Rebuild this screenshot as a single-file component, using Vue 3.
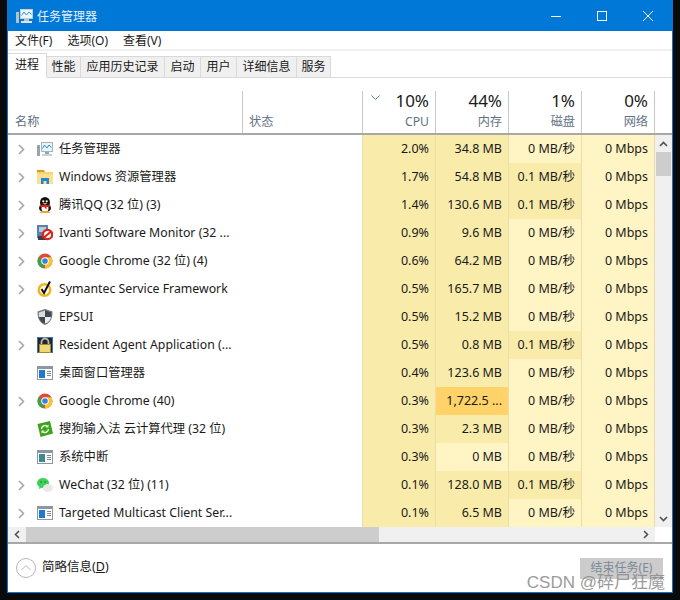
<template>
  <div class="window">
    <div class="titlebar">
      <svg class="title-icon" viewBox="0 0 17 16" width="17" height="16">
        <rect x="4" y="1" width="13" height="10" fill="#c3ccd1" />
        <rect x="5" y="2" width="11" height="8" fill="#eaf7fc" />
        <path d="M5.500 7.500 8 4l2.500 3L13 4l2.500 2.500" fill="none" stroke="#3d8fd0" stroke-width="1" />
        <rect x="0" y="4" width="3" height="11" fill="#b9c2c6" />
        <rect x="1" y="6" width="1" height="1" fill="#5fe05f" />
        <rect x="8" y="11" width="5" height="2" fill="#b9c2c6" />
        <rect x="5" y="13" width="11" height="2" fill="#dfe5e8" />
      </svg>
      <span class="title-text">任务管理器</span>
      <div class="win-controls">
        <svg viewBox="0 0 10 10" width="10" height="10"><path d="M0 5.500h10" stroke="#fff" stroke-width="1" /></svg>
        <svg viewBox="0 0 10 10" width="10" height="10"><rect x=".5" y=".5" width="9" height="9" fill="none" stroke="#fff" stroke-width="1" /></svg>
        <svg viewBox="0 0 10 10" width="10" height="10"><path d="M0 0l10 10M10 0 0 10" stroke="#fff" stroke-width="1" /></svg>
      </div>
    </div>

    <div class="menubar">
      <span v-for="m in menus" :key="m">{{ m }}</span>
    </div>

    <div class="tabs">
      <div v-for="(t, i) in tabs" :key="t.label" :class="['tab', i === 0 ? 'active' : '']" :style="{ width: t.w + 'px' }">{{ t.label }}</div>
    </div>

    <div class="table-head">
      <div class="th th-name"><span class="th-label">名称</span></div>
      <div class="th th-status"><span class="th-label">状态</span></div>
      <div v-for="c in columns" :key="c.label" class="th th-num">
        <svg v-if="c.sort" class="sort" viewBox="0 0 9 5" width="9" height="5"><path d="M.5.5l4 4 4-4" fill="none" stroke="#5b7f9f" stroke-width="1" /></svg>
        <span class="th-pct">{{ c.pct }}</span>
        <span class="th-label">{{ c.label }}</span>
      </div>
    </div>

    <div class="table-body">
      <div class="rows">
        <div v-for="r in rows" :key="r.name" class="row">
          <div class="cell-name">
            <span class="chevron">
              <svg v-if="r.expand" viewBox="0 0 7 11" width="7" height="11"><path d="M1 1l4.500 4.500L1 10" fill="none" stroke="#a6a6a6" stroke-width="1.600" /></svg>
            </span>
            <svg class="app-icon" viewBox="0 0 16 16" width="16" height="16">
              <template v-if="r.icon === 'taskmgr'">
                <rect x="4" y="1" width="12" height="10" fill="#a9b4ba" />
                <rect x="5" y="2" width="10" height="8" fill="#e4f5fb" />
                <path d="M5.500 7.500 7.500 4 10 7l2-3 2.500 2.500" fill="none" stroke="#3d8fd0" stroke-width="1" />
                <rect x="0" y="4" width="3" height="11" fill="#9aa5ab" />
                <rect x="1" y="6" width="1" height="1" fill="#3fc03f" />
                <rect x="8" y="11" width="4" height="2" fill="#9aa5ab" />
                <rect x="5" y="13" width="10" height="2" fill="#c9d1d5" />
              </template>
              <template v-else-if="r.icon === 'explorer'">
                <path d="M0 1h7l1 2h-8z" fill="#d69a2d" />
                <rect x="0" y="3" width="16" height="12" fill="#f6d36f" />
                <rect x="0" y="5" width="16" height="10" fill="#fbe08f" />
                <path d="M4 15v-6h8v6h-2.500v-3h-3v3z" fill="#1f86d8" />
              </template>
              <template v-else-if="r.icon === 'qq'">
                <ellipse cx="8" cy="5.500" rx="5" ry="5.500" fill="#111" />
                <ellipse cx="8" cy="11" rx="6" ry="4.300" fill="#111" />
                <ellipse cx="8" cy="11.500" rx="3.500" ry="3.200" fill="#fff" />
                <circle cx="6.300" cy="4.300" r="1.100" fill="#fff" />
                <circle cx="9.700" cy="4.300" r="1.100" fill="#fff" />
                <path d="M2.500 8h11l-1 2H9.500v2.500L7 10H3.500z" fill="#d8261c" />
                <path d="M5.500 6h5L8 7.800z" fill="#f5b52a" />
                <path d="M2 16l3.500-2h5l3.500 2z" fill="#f5a623" />
              </template>
              <template v-else-if="r.icon === 'ivanti'">
                <rect x="0" y="0" width="11" height="13" fill="#5d7fa8" />
                <rect x="2" y="2" width="7" height="5" fill="#b7cbe0" />
                <rect x="1" y="11" width="9" height="4" fill="#3b3f46" />
                <circle cx="10.500" cy="9.500" r="4.700" fill="#fff" stroke="#d8261c" stroke-width="2.200" />
                <path d="M7 12.500l7-6" stroke="#d8261c" stroke-width="2.200" />
              </template>
              <template v-else-if="r.icon === 'chrome'">
                <circle cx="8" cy="8" r="7.500" fill="#dd4b39" />
                <path d="M8 8v7.500A7.500 7.500 0 0 0 15.500 8c0-1.300-.4-2.600-1-3.700H8z" fill="#f7c531" />
                <path d="M8 8 6.500 15.300A7.500 7.500 0 0 1 2 3.500l3 5z" fill="#3ba14a" />
                <circle cx="8" cy="8" r="3.800" fill="#fff" />
                <circle cx="8" cy="8" r="2.800" fill="#3f7fe0" />
              </template>
              <template v-else-if="r.icon === 'symantec'">
                <circle cx="7.500" cy="9" r="5.800" fill="#fffbe8" stroke="#f3b51c" stroke-width="2.400" />
                <path d="M4.500 8 7 12l6-11.500" fill="none" stroke="#111" stroke-width="2" />
              </template>
              <template v-else-if="r.icon === 'shield'">
                <path d="M8 0 15.500 2.500C15.500 9 14 13.500 8 16 2 13.500.5 9 .5 2.500z" fill="#6d767b" />
                <path d="M8 1.500V8H2c-.2-1.500-.2-3-.2-4.500z" fill="#d8dcde" />
                <path d="M8 8h6c-.6 3-2.300 5.300-6 6.500z" fill="#eceef0" />
                <path d="M8 1.500l6.200 2c0 1.500 0 3-.2 4.500H8zM8 8v6.500C4.300 13.300 2.600 11 2 8z" fill="#434a4f" />
              </template>
              <template v-else-if="r.icon === 'lock'">
                <rect x="0" y="0" width="16" height="16" fill="#3f74a8" />
                <rect x="1" y="1" width="14" height="14" fill="#20262c" />
                <path d="M4.500 8.500V5a3.500 3.500 0 0 1 7 0v3.500" fill="none" stroke="#b5b5aa" stroke-width="1.800" />
                <rect x="2.500" y="7.500" width="11" height="8" fill="#eed77a" stroke="#a58a2c" stroke-width="1" />
              </template>
              <template v-else-if="r.icon === 'sogou'">
                <path d="M.5 3 13 0l3 12.500L3.500 16z" fill="#3aa31e" />
                <path d="M4.500 8a3.500 3.500 0 0 1 6-2.400M11.500 8a3.500 3.500 0 0 1-6 2.400" fill="none" stroke="#e9f7df" stroke-width="1.500" />
                <path d="M11.500 3.500v3h-3zM4.500 12.500v-3h3z" fill="#e9f7df" />
              </template>
              <template v-else-if="r.icon === 'wechat'">
                <ellipse cx="6" cy="6" rx="6" ry="5" fill="#3fd05a" />
                <path d="M2.500 9l-.5 3 3-1.500z" fill="#3fd05a" />
                <ellipse cx="11" cy="11" rx="5" ry="4" fill="#e9e9e9" />
                <circle cx="4" cy="5" r=".8" fill="#157a2a" />
                <circle cx="8" cy="5" r=".8" fill="#157a2a" />
              </template>
              <template v-else>
                <rect x="0" y="1" width="16" height="14" fill="#8e979d" />
                <rect x="1" y="4" width="14" height="10" fill="#fff" />
                <rect x="2" y="5" width="6" height="8" :fill="r.icon === 'frame2' ? '#3b8a8f' : '#1f78d1'" />
                <path d="M10 6.500h4M10 8.500h4M10 10.500h4" stroke="#7f8a90" stroke-width="1" />
              </template>
            </svg>
            <span class="name-text">{{ r.name }}</span>
          </div>
          <div class="cell-status"></div>
          <div class="cell dark">{{ r.cpu }}</div>
          <div :class="['cell', r.memHeat]">{{ r.mem }}</div>
          <div :class="['cell', r.disk.startsWith('0.1') ? 'dark' : 'light']">{{ r.disk }}</div>
          <div class="cell light">0 Mbps</div>
        </div>
      </div>
      <div class="vscroll">
        <span class="arrow"><svg viewBox="0 0 9 6" width="9" height="6"><path d="M1 5l3.500-3.500L8 5" fill="none" stroke="#505050" stroke-width="1.600" /></svg></span>
        <div class="vthumb"></div>
        <div class="spacer"></div>
        <span class="arrow"><svg viewBox="0 0 9 6" width="9" height="6"><path d="M1 1l3.500 3.500L8 1" fill="none" stroke="#505050" stroke-width="1.600" /></svg></span>
      </div>
    </div>

    <div class="hscroll">
      <div class="hleft"><svg viewBox="0 0 6 9" width="6" height="9"><path d="M5 1 1.500 4.500 5 8" fill="none" stroke="#505050" stroke-width="1.600" /></svg></div>
      <div class="hthumb"></div>
      <div class="htrack"><svg viewBox="0 0 6 9" width="6" height="9"><path d="M1 1l3.500 3.500L1 8" fill="none" stroke="#505050" stroke-width="1.600" /></svg></div>
      <div class="hcorner"></div>
    </div>

    <div class="footer">
      <div class="less">
        <svg viewBox="0 0 20 20" width="20" height="20"><circle cx="10" cy="10" r="9.500" fill="none" stroke="#b5b5b5" stroke-width="1" /><path d="M5.500 12l4.500-4.500 4.500 4.500" fill="none" stroke="#b5b5b5" stroke-width="1" /></svg>
        <span class="less-text">简略信息(<u>D</u>)</span>
      </div>
      <div class="end-task"><span>结束任务(E)</span></div>
    </div>
    <div class="watermark">CSDN @碎尸狂魔</div>
  </div>
</template>

<script setup>
const menus = ["文件(F)", "选项(O)", "查看(V)"];

const tabs = [
  { label: "进程", w: 39 },
  { label: "性能", w: 34 },
  { label: "应用历史记录", w: 84 },
  { label: "启动", w: 36 },
  { label: "用户", w: 36 },
  { label: "详细信息", w: 60 },
  { label: "服务", w: 34 },
];

const columns = [
  { pct: "10%", label: "CPU", sort: true },
  { pct: "44%", label: "内存" },
  { pct: "1%", label: "磁盘" },
  { pct: "0%", label: "网络" },
];

const rows = [
  { name: "任务管理器", icon: "taskmgr", expand: true, cpu: "2.0%", mem: "34.8 MB", memHeat: "dark", disk: "0 MB/秒" },
  { name: "Windows 资源管理器", icon: "explorer", expand: true, cpu: "1.7%", mem: "54.8 MB", memHeat: "dark", disk: "0.1 MB/秒" },
  { name: "腾讯QQ (32 位) (3)", icon: "qq", expand: true, cpu: "1.4%", mem: "130.6 MB", memHeat: "dark", disk: "0.1 MB/秒" },
  { name: "Ivanti Software Monitor (32 ...", icon: "ivanti", expand: true, cpu: "0.9%", mem: "9.6 MB", memHeat: "dark", disk: "0 MB/秒" },
  { name: "Google Chrome (32 位) (4)", icon: "chrome", expand: true, cpu: "0.6%", mem: "64.2 MB", memHeat: "dark", disk: "0 MB/秒" },
  { name: "Symantec Service Framework", icon: "symantec", expand: true, cpu: "0.5%", mem: "165.7 MB", memHeat: "dark", disk: "0 MB/秒" },
  { name: "EPSUI", icon: "shield", expand: false, cpu: "0.5%", mem: "15.2 MB", memHeat: "dark", disk: "0 MB/秒" },
  { name: "Resident Agent Application (...", icon: "lock", expand: true, cpu: "0.5%", mem: "0.8 MB", memHeat: "dark", disk: "0.1 MB/秒" },
  { name: "桌面窗口管理器", icon: "frame", expand: false, cpu: "0.4%", mem: "123.6 MB", memHeat: "dark", disk: "0 MB/秒" },
  { name: "Google Chrome (40)", icon: "chrome", expand: true, cpu: "0.3%", mem: "1,722.5 ...", memHeat: "hot", disk: "0 MB/秒" },
  { name: "搜狗输入法 云计算代理 (32 位)", icon: "sogou", expand: false, cpu: "0.3%", mem: "2.3 MB", memHeat: "dark", disk: "0 MB/秒" },
  { name: "系统中断", icon: "frame2", expand: false, cpu: "0.3%", mem: "0 MB", memHeat: "light", disk: "0 MB/秒" },
  { name: "WeChat (32 位) (11)", icon: "wechat", expand: true, cpu: "0.1%", mem: "128.0 MB", memHeat: "dark", disk: "0.1 MB/秒" },
  { name: "Targeted Multicast Client Ser...", icon: "frame", expand: true, cpu: "0.1%", mem: "6.5 MB", memHeat: "dark", disk: "0 MB/秒" },
];
</script>

<style>
html,
body {
  background: #0a0a0a;
}
</style>

<style scoped>
.window {
  position: relative;
  box-sizing: border-box;
  width: 666px;
  height: 593px;
  margin-left: 7px;
  display: flex;
  flex-direction: column;
  background: #fff;
  border: 1px solid #0078d7;
  border-top: none;
  font-family: "Noto Sans", "Noto Sans CJK SC", sans-serif;
  font-size: 12.5px;
  color: #1a1a1a;
}

.titlebar {
  height: 31px;
  flex: none;
  display: flex;
  align-items: center;
  background: #0078d7;
  color: #fff;
  padding-left: 8px;
}
.title-icon {
  margin-right: 4px;
}
.title-text {
  font-size: 12px;
  opacity: 0.9;
}
.win-controls {
  margin-left: auto;
  display: flex;
  gap: 36px;
  padding-right: 19px;
}

.menubar {
  height: 18px;
  flex: none;
  display: flex;
  align-items: center;
  gap: 15px;
  padding-left: 7px;
  font-size: 12px;
  border-bottom: 2px solid #f0f0f0;
}

.tabs {
  height: 27px;
  flex: none;
  box-sizing: border-box;
  display: flex;
  align-items: flex-end;
  border-bottom: 1px solid #d9d9d9;
  padding-top: 3px;
  font-size: 12px;
}
.tab {
  box-sizing: border-box;
  height: 22px;
  margin-bottom: -1px;
  background: #f0f0f0;
  border: 1px solid #d9d9d9;
  border-left: none;
  text-align: center;
  line-height: 20px;
}
.tab.active {
  height: 25px;
  background: #fff;
  border-bottom-color: #fff;
  line-height: 21px;
}

.table-head {
  height: 57px;
  flex: none;
  box-sizing: border-box;
  display: grid;
  grid-template-columns: 235px 120px repeat(4, 73px);
  align-items: end;
  border-bottom: 2px solid #a8a8a8;
  padding-top: 13px;
  color: #5f7285;
}
.th {
  box-sizing: border-box;
  height: 42px;
  border-right: 1px solid #c8c8c8;
  display: flex;
  flex-direction: column;
  justify-content: flex-end;
  padding-bottom: 2px;
}
.th-label {
  font-size: 12.2px;
  line-height: 18px;
}
.th-name,
.th-status {
  padding-left: 6px;
}
.th-name {
  padding-left: 7px;
}
.th-num {
  position: relative;
  align-items: flex-end;
  padding-right: 6px;
}
.th-pct {
  font-size: 17px;
  line-height: 25px;
  color: #1a1a1a;
}
.sort {
  position: absolute;
  left: 8px;
  top: 4px;
}

.table-body {
  flex: none;
  display: flex;
  height: 392px;
}
.rows {
  width: 647px;
  flex: none;
  overflow: hidden;
}
.row {
  display: grid;
  grid-template-columns: 235px 119px 74px repeat(3, 73px);
  height: 28px;
}
.cell-name {
  display: flex;
  align-items: center;
}
.chevron {
  width: 29px;
  flex: none;
  display: flex;
  justify-content: flex-end;
  padding-right: 12px;
  box-sizing: border-box;
}
.app-icon {
  margin-right: 6px;
  flex: none;
}
.name-text {
  white-space: nowrap;
  font-size: 12.3px;
  line-height: 28px;
}
.cell {
  box-sizing: border-box;
  text-align: right;
  line-height: 28px;
  padding-right: 6px;
  border-right: 1px solid #ecdca8;
  white-space: nowrap;
}
.row > .cell:nth-child(3) {
  border-left: 1px solid #ecdca8;
}
.cell.dark {
  background: #f9ecab;
}
.cell.light {
  background: #fff4c4;
}
.cell.hot {
  background: #ffd26a;
}

.vscroll {
  width: 17px;
  flex: none;
  background: #f0f0f0;
  display: flex;
  flex-direction: column;
  align-items: center;
}
.arrow {
  height: 17px;
  display: flex;
  align-items: center;
  justify-content: center;
}
.vthumb {
  width: 15px;
  height: 24px;
  background: #cdcdcd;
}
.spacer {
  flex: 1;
}

.hscroll {
  height: 15px;
  flex: none;
  display: flex;
  border-bottom: 2px solid #a8a8a8;
}
.hleft {
  width: 18px;
  background: #f0f0f0;
  display: flex;
  align-items: center;
  justify-content: center;
}
.hthumb {
  width: 353px;
  background: #cdcdcd;
}
.htrack {
  flex: 1;
  background: #f0f0f0;
  display: flex;
  align-items: center;
  justify-content: flex-end;
  padding-right: 6px;
}
.hcorner {
  width: 17px;
}

.footer {
  flex: 1;
  display: flex;
  align-items: center;
  justify-content: space-between;
  padding: 0 9px 0 8px;
}
.less {
  display: flex;
  align-items: center;
  gap: 6px;
}
.less-text {
  line-height: 18px;
  margin-top: -2px;
}
.end-task {
  width: 83px;
  height: 21px;
  box-sizing: border-box;
  background: #cccccc;
  color: #7d8a96;
  font-size: 12px;
  display: flex;
  justify-content: center;
  padding-top: 3px;
}
.end-task span {
  line-height: 14px;
  height: 14px;
}

.watermark {
  position: absolute;
  right: 7px;
  bottom: 1px;
  font-family: "Liberation Sans", "Noto Sans CJK SC", sans-serif;
  font-size: 17px;
  line-height: 17px;
  color: #8a8a8a;
  opacity: 0.85;
}
</style>
